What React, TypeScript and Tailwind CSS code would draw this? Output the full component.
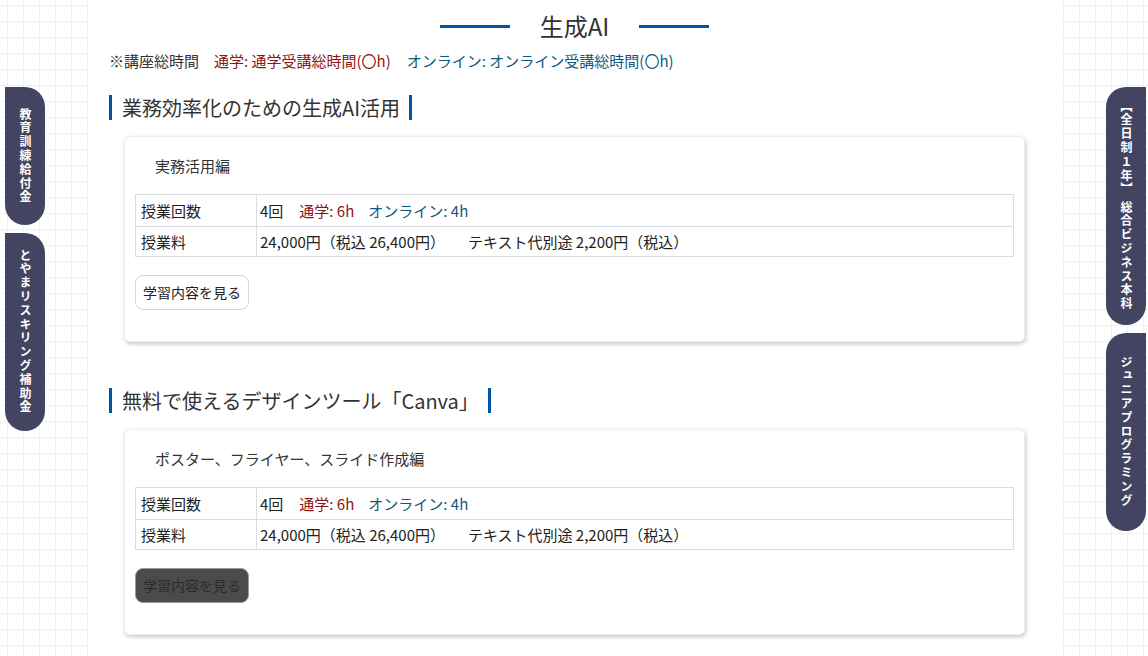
import React from "react"

const font = { fontFamily: '"Noto Sans CJK JP", "Noto Sans", sans-serif' }

type Course = {
  heading: string
  subtitle: string
  dark?: boolean
}

const courses: Course[] = [
  { heading: "業務効率化のための生成AI活用", subtitle: "実務活用編" },
  { heading: "無料で使えるデザインツール「Canva」", subtitle: "ポスター、フライヤー、スライド作成編", dark: true },
]

function SideTab({ label, side, height }: { label: string; side: "left" | "right"; height: string }) {
  const shape = side === "left" ? "rounded-tr-[20px] rounded-b-[20px]" : "rounded-tl-[20px] rounded-b-[20px]"
  return (
    <div
      className={`w-[40px] ${height} ${shape} bg-[#434462] text-white flex items-center justify-center`}
    >
      <span className="[writing-mode:vertical-rl] text-[12px] font-bold tracking-[1.8px] leading-none">{label}</span>
    </div>
  )
}

function CourseCard({ course }: { course: Course }) {
  return (
    <section>
      <h3 className="inline-block text-[20px] leading-[25px] text-[#333] border-l-[3px] border-r-[3px] border-[#0055a5] pl-[10px] pr-[9px]">
        {course.heading}
      </h3>
      <div className="mx-[15px] mt-[15px] bg-white rounded-[6px] shadow-[1px_2px_4px_rgba(0,0,0,0.22)] border border-[#eeeeee] pl-[10px] pr-[10px] pt-[18px] pb-[31px]">
        <p className="pl-[20px] text-[15px] leading-[22px] text-[#333]">{course.subtitle}</p>
        <table className="w-full mt-[17px] border-collapse text-[15px] leading-[21px] text-[#222]">
          <tbody>
            <tr>
              <td className="w-[121px] border border-[#d9dce0] px-[5px] py-[5px]">授業回数</td>
              <td className="border border-[#d9dce0] px-[3px] py-[5px]">
                4回<span className="ml-[16px] text-[#8f1414]">通学: 6h</span>
                <span className="ml-[14px] text-[#0f5a7c]">オンライン: 4h</span>
              </td>
            </tr>
            <tr>
              <td className="border border-[#d9dce0] px-[5px] py-[4px]">授業料</td>
              <td className="border border-[#d9dce0] px-[3px] py-[4px]">
                24,000円（税込 26,400円）<span className="ml-[23px]">テキスト代別途 2,200円（税込）</span>
              </td>
            </tr>
          </tbody>
        </table>
        <button
          className={`block mt-[18px] h-[35px] px-[7px] rounded-[8px] border text-[14px] ${
            course.dark ? "bg-[#4b4b4b] border-[#9a9a9a] text-[#2b2b2b]" : "bg-white border-[#d6d6d6] text-[#222]"
          }`}
        >
          学習内容を見る
        </button>
      </div>
    </section>
  )
}

export default function App() {
  return (
    <div
      className="relative min-h-screen bg-white bg-[linear-gradient(#f0f0f0_1px,transparent_1px),linear-gradient(90deg,#f0f0f0_1px,transparent_1px)] bg-[size:16px_16px] bg-[position:7px_5px]"
      style={font}
    >
      <main className="w-[972px] mx-auto bg-white min-h-screen pl-[21px] pr-[20px] pt-[8px] pb-[40px]">
        <div className="flex items-center justify-center gap-[30px] h-[36px]">
          <span className="w-[70px] h-[3px] bg-[#0055a5]" />
          <h2 className="text-[24px] text-[#333]">生成AI</h2>
          <span className="w-[70px] h-[3px] bg-[#0055a5]" />
        </div>
        <p className="mt-[6px] text-[15px] leading-[21px] text-[#333]">
          ※講座総時間
          <span className="ml-[15px] text-[#8f1414]">通学: 通学受講総時間(〇h)</span>
          <span className="ml-[16px] text-[#0f5a7c]">オンライン: オンライン受講総時間(〇h)</span>
        </p>
        <div className="mt-[24px] flex flex-col gap-[46px]">
          {courses.map((c) => (
            <CourseCard key={c.heading} course={c} />
          ))}
        </div>
      </main>

      <div className="absolute left-[5px] top-[87px] flex flex-col gap-[8px]">
        <SideTab side="left" label="教育訓練給付金" height="h-[138px]" />
        <SideTab side="left" label="とやまリスキリング補助金" height="h-[198px]" />
      </div>
      <div className="absolute right-[2px] top-[87px] flex flex-col gap-[8px]">
        <SideTab side="right" label="【全日制１年】 総合ビジネス本科" height="h-[238px]" />
        <SideTab side="right" label="ジュニアプログラミング" height="h-[198px]" />
      </div>
    </div>
  )
}
